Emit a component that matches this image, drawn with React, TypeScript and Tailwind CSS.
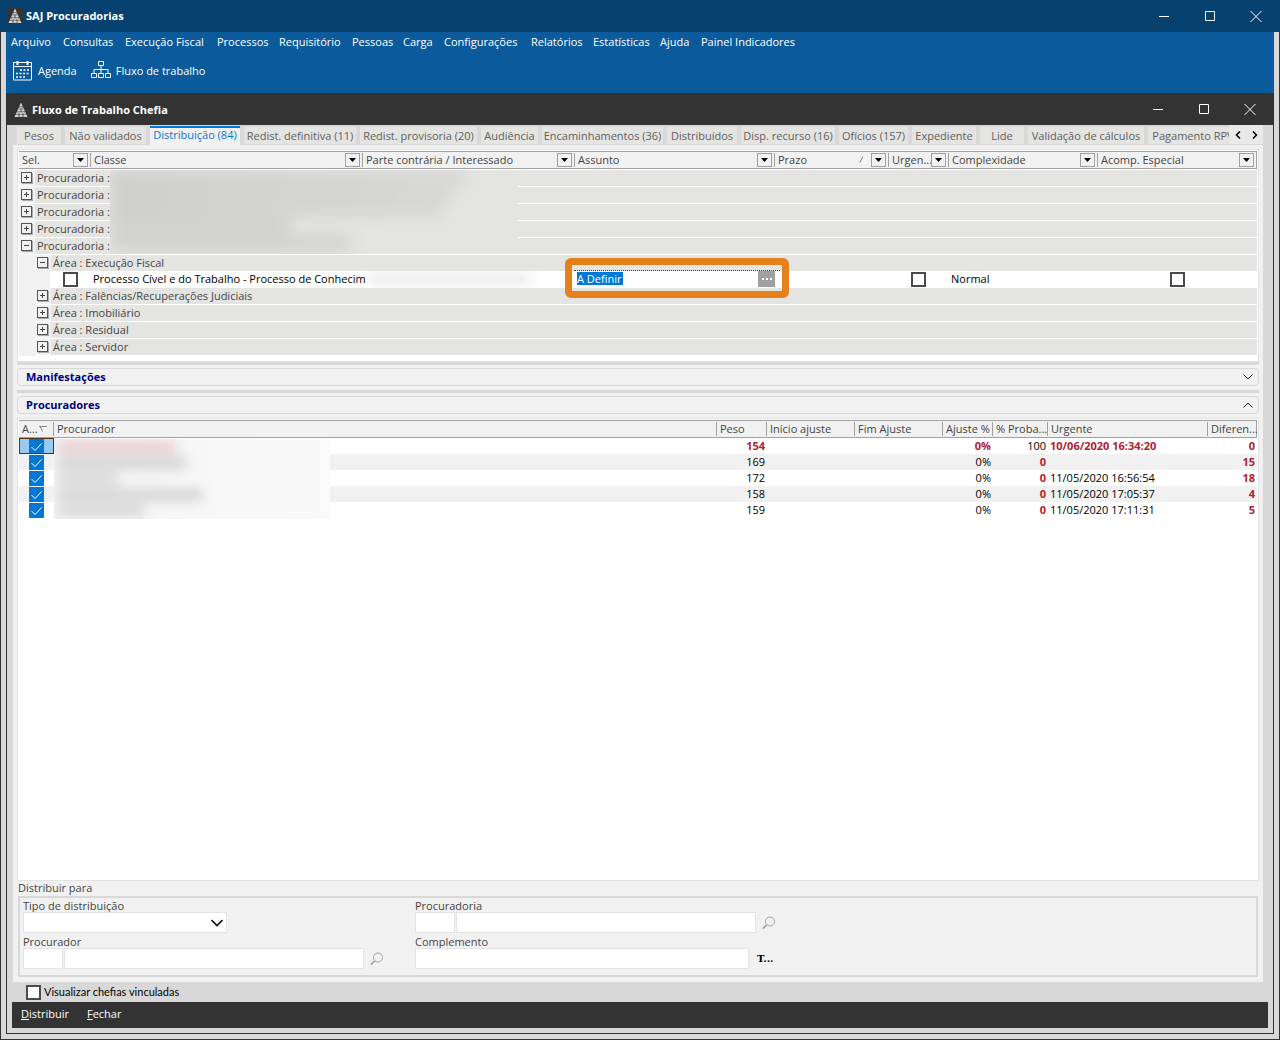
import type { ReactNode } from 'react'
import clsx from 'clsx'

const menu = [
  { label: 'Arquivo', width: 'w-[52px]' },
  { label: 'Consultas', width: 'w-[62px]' },
  { label: 'Execução Fiscal', width: 'w-[92px]' },
  { label: 'Processos', width: 'w-[62px]' },
  { label: 'Requisitório', width: 'w-[73px]' },
  { label: 'Pessoas', width: 'w-[51px]' },
  { label: 'Carga', width: 'w-[41px]' },
  { label: 'Configurações', width: 'w-[87px]' },
  { label: 'Relatórios', width: 'w-[62px]' },
  { label: 'Estatísticas', width: 'w-[67px]' },
  { label: 'Ajuda', width: 'w-[41px]' },
  { label: 'Painel Indicadores', width: 'w-[110px]' },
]

const tabs = [
  { label: 'Pesos', width: 'w-[44px]' },
  { label: 'Não validados', width: 'w-[81px]' },
  { label: 'Distribuição (84)', width: 'w-[90px]', active: true },
  { label: 'Redist. definitiva (11)', width: 'w-[112px]' },
  { label: 'Redist. provisoria (20)', width: 'w-[117px]' },
  { label: 'Audiência', width: 'w-[57px]' },
  { label: 'Encaminhamentos (36)', width: 'w-[121px]' },
  { label: 'Distribuídos', width: 'w-[70px]' },
  { label: 'Disp. recurso (16)', width: 'w-[94px]' },
  { label: 'Ofícios (157)', width: 'w-[69px]' },
  { label: 'Expediente', width: 'w-[64px]' },
  { label: 'Lide', width: 'w-[44px]' },
  { label: 'Validação de cálculos', width: 'w-[116px]' },
  { label: 'Pagamento RPV', width: 'w-[90px]' },
]

const processColumns = [
  { label: 'Sel.', width: 'w-[72px]' },
  { label: 'Classe', width: 'w-[272px]' },
  { label: 'Parte contrária / Interessado', width: 'w-[212px]' },
  { label: 'Assunto', width: 'w-[200px]' },
  { label: 'Prazo', width: 'w-[114px]', sorted: true },
  { label: 'Urgen...', width: 'w-[60px]' },
  { label: 'Complexidade', width: 'w-[149px]' },
  { label: 'Acomp. Especial', width: 'w-auto' },
]

const attorneyColumns = [
  { label: 'A...', width: 'w-[35px]' },
  { label: 'Procurador', width: 'w-auto' },
  { label: 'Peso', width: 'w-[50px]' },
  { label: 'Início ajuste', width: 'w-[88px]' },
  { label: 'Fim Ajuste', width: 'w-[88px]' },
  { label: 'Ajuste %', width: 'w-[50px]' },
  { label: '% Proba...', width: 'w-[55px]' },
  { label: 'Urgente', width: 'w-[160px]' },
  { label: 'Diferen...', width: 'w-[49px]' },
]

const attorneys = [
  { weight: 154, probability: 100, urgent: '10/06/2020 16:34:20', difference: 0 },
  { weight: 169, probability: 0, urgent: '', difference: 15 },
  { weight: 172, probability: 0, urgent: '11/05/2020 16:56:54', difference: 18 },
  { weight: 158, probability: 0, urgent: '11/05/2020 17:05:37', difference: 4 },
  { weight: 159, probability: 0, urgent: '11/05/2020 17:11:31', difference: 5 },
]

function Logo({ className }: { className?: string }) {
  return (
    <svg viewBox="0 0 16 16" className={clsx('size-4 bg-[#333]', className)}>
      <path d="M8 0.500 L14.500 15 H1.500 Z" fill="#d4d4d4" />
      <path
        d="M6 4 L11 15 M4 9 L7 15 M10 4 L5 15 M12 9 L9 15 M5 4.500 H11 M5 7 H11 M4 9.500 H13 M2 12.500 H14"
        stroke="#444"
        strokeWidth="0.500"
        fill="none"
      />
    </svg>
  )
}

function WindowButtons() {
  return (
    <div className="flex items-center">
      <button aria-label="Minimizar" className="flex h-8 w-[46px] items-center justify-center">
        <svg viewBox="0 0 12 12" className="size-3" stroke="#fff" fill="none">
          <path d="M1 6.500 H11" />
        </svg>
      </button>
      <button aria-label="Maximizar" className="flex h-8 w-[46px] items-center justify-center">
        <svg viewBox="0 0 12 12" className="size-3" stroke="#fff" fill="none">
          <path d="M1.500 1.500 H10.500 V10.500 H1.500 Z" />
        </svg>
      </button>
      <button aria-label="Fechar janela" className="flex h-8 w-[46px] items-center justify-center">
        <svg viewBox="0 0 12 12" className="size-3" stroke="#fff" fill="none">
          <path d="M0.500 1 L11.500 12 M11.500 1 L0.500 12" />
        </svg>
      </button>
    </div>
  )
}

function CheckBox({ label, checked }: { label: string; checked?: boolean }) {
  return (
    <span className="inline-grid size-[15px] align-top">
      <input
        type="checkbox"
        aria-label={label}
        defaultChecked={checked}
        className="peer col-start-1 row-start-1 size-[15px] appearance-none border-2 border-[#4b4b4b] bg-white checked:border-[#0078d7] checked:bg-[#0078d7]"
      />
      <svg
        viewBox="0 0 15 15"
        className="pointer-events-none col-start-1 row-start-1 hidden size-[15px] peer-checked:block"
        fill="none"
        stroke="#fff"
      >
        <path d="M2.500 8 L6 11.500 L12.500 4.500" />
      </svg>
    </span>
  )
}

function FilterButton({ label }: { label: string }) {
  return (
    <button
      aria-label={`Filtrar ${label}`}
      className="flex h-[14px] w-[15px] shrink-0 items-center justify-center border border-[#a0a0a0] bg-[#f1f1f1]"
    >
      <svg viewBox="0 0 7 4" className="h-1 w-[7px]">
        <path d="M0 0 H7 L3.500 4 Z" fill="#000" />
      </svg>
    </button>
  )
}

function ExpandButton({ open, label }: { open?: boolean; label: string }) {
  return (
    <button
      aria-label={`${open ? 'Recolher' : 'Expandir'} ${label}`}
      className="mt-0.5 ml-0.5 block size-[11px] border border-[#555] bg-[#f1f1f1] shadow-[1px_1px_0_#aaa]"
    >
      <svg viewBox="0 0 9 9" className="size-[9px]" stroke="#444" fill="none">
        <path d={open ? 'M2 4.500 H7' : 'M2 4.500 H7 M4.500 2 V7'} />
      </svg>
    </button>
  )
}

function GroupRow({ label, open, nested, last }: { label: string; open?: boolean; nested?: boolean; last?: boolean }) {
  return (
    <tr>
      <td colSpan={8} className="p-0">
        <div className={clsx('flex', open && nested ? 'h-4' : 'h-[17px]')}>
          {nested && <div className="w-4 bg-[#f1f1f1]" />}
          <div
            className={clsx('flex flex-1 border-white', open && nested ? 'border-b-0' : 'border-b', last && 'border-b-0 mb-px')}
          >
            <div className="w-4 bg-[#f1f1f1]">
              <ExpandButton open={open} label={label} />
            </div>
            <div className="flex-1 bg-[#e4e4e2] pl-0.5 leading-4">{label}</div>
          </div>
        </div>
      </td>
    </tr>
  )
}

function SectionBar({ title, open }: { title: string; open?: boolean }) {
  return (
    <div className="border-t-[3px] border-[#d8d8d8] pt-[3px]">
      <button
        aria-expanded={!!open}
        className="flex h-[18px] w-full items-center justify-between rounded-sm border border-[#d8d8d8] pr-[5px] pl-2 font-bold text-[#000080]"
      >
        {title}
        <svg viewBox="0 0 10 6" className="h-1.5 w-2.5" stroke="#222" fill="none">
          <path d={open ? 'M0.500 5.500 L5 1 L9.500 5.500' : 'M0.500 0.500 L5 5 L9.500 0.500'} />
        </svg>
      </button>
    </div>
  )
}

function SearchButton({ label }: { label: string }) {
  return (
    <button aria-label={label} className="ml-[5px] p-px">
      <svg viewBox="0 0 13 13" className="size-[13px]" fill="none">
        <circle cx="8" cy="5.500" r="4.500" stroke="#a3a3a3" />
        <path d="M4.500 9 L1 12.500" stroke="#999" strokeWidth="1.600" />
      </svg>
    </button>
  )
}

function Field({ label, id, children }: { label: string; id: string; children: ReactNode }) {
  return (
    <div className="flex flex-col">
      <label htmlFor={id} className="h-[14px] leading-4">
        {label}
      </label>
      <div className="flex h-[21px] items-center">{children}</div>
    </div>
  )
}

const inputStyle = 'h-[21px] border border-[#e3e3e3] bg-white px-1 outline-0'

export default function App() {
  return (
    <div className="flex min-h-screen flex-col bg-[#d8d8d8] font-['Open_Sans','Noto_Sans',sans-serif] text-[11px] leading-4 text-[#444]">
      <header className="flex h-8 items-center justify-between bg-[#06416f] pr-px pl-[7px] text-white">
        <div className="flex items-center gap-[3px] font-bold">
          <Logo />
          SAJ Procuradorias
        </div>
        <WindowButtons />
      </header>

      <div className="flex flex-1 flex-col border-x border-b border-[#333] px-[5px] pb-[5px]">
        <div className="h-[61px] bg-[#0b5a9c] text-white">
          <nav className="flex pt-0.5 pl-[5px]">
            {menu.map((item) => (
              <button key={item.label} className={clsx('shrink-0 text-left whitespace-nowrap', item.width)}>
                {item.label}
              </button>
            ))}
          </nav>
          <div className="flex gap-[14px] pt-[10px] pl-[7px]">
            <button className="flex items-center gap-[5px]">
              <svg viewBox="0 0 20 21" className="h-[21px] w-5" fill="none" stroke="#fff">
                <path d="M0.500 2.500 H18.500 V20 H0.500 Z M0.500 6.500 H18.500" />
                <path d="M4.500 1 V5 M14.500 1 V5" strokeWidth="2" />
                <path d="M7 10 H17 M3 13.500 H17 M3 17 H13" strokeWidth="1.600" strokeDasharray="2 1.500" />
              </svg>
              Agenda
            </button>
            <button className="flex items-center gap-[5px]">
              <svg viewBox="0 0 20 20" className="size-5" fill="none" stroke="#fff">
                <path d="M7.500 0.500 H12.500 V4.500 H7.500 Z M0.500 12.500 H5.500 V16.500 H0.500 Z M7.500 12.500 H12.500 V16.500 H7.500 Z M14.500 12.500 H19.500 V16.500 H14.500 Z" />
                <path d="M10 4.500 V12.500 M3 12.500 V8.500 H17 V12.500" />
              </svg>
              Fluxo de trabalho
            </button>
          </div>
        </div>

        <div className="flex flex-1 flex-col border-x border-b border-[#333]">
          <div className="flex h-8 shrink-0 items-center justify-between bg-[#333] pl-1.5 text-white">
            <div className="flex items-center gap-[3px] pt-0.5 font-bold">
              <Logo />
              Fluxo de Trabalho Chefia
            </div>
            <WindowButtons />
          </div>

          <div className="flex h-5 shrink-0 pr-[10px] pl-[10px]">
            <div role="tablist" className="flex flex-1 basis-0 gap-1 overflow-hidden">
              {tabs.map((tab) => (
                <button
                  key={tab.label}
                  role="tab"
                  aria-selected={!!tab.active}
                  className={clsx(
                    'shrink-0 text-center whitespace-nowrap',
                    tab.width,
                    tab.active
                      ? 'mt-px h-[19px] border-t-2 border-[#0078d7] bg-[#f1f1f1] pb-1 leading-[14px] text-[#0078d7]'
                      : 'mt-0.5 h-[17px] bg-[#e4e4e2] text-[#606060]',
                  )}
                >
                  {tab.label}
                </button>
              ))}
            </div>
            <div className="flex h-[19px] w-[34px] items-center justify-around bg-[#e9e9e9]">
              <button aria-label="Abas anteriores">
                <svg viewBox="0 0 6 8" className="h-2 w-1.5" fill="none" stroke="#000" strokeWidth="1.500">
                  <path d="M5 0.500 L1.500 4 L5 7.500" />
                </svg>
              </button>
              <button aria-label="Próximas abas">
                <svg viewBox="0 0 6 8" className="h-2 w-1.5" fill="none" stroke="#000" strokeWidth="1.500">
                  <path d="M1 0.500 L4.500 4 L1 7.500" />
                </svg>
              </button>
            </div>
          </div>

          <main className="mr-[10px] ml-1.5 flex flex-1 flex-col bg-[#f1f1f1] px-1 pt-1 pb-[5px]">
            <div className="relative border border-[#e3e3e3] bg-white p-px pb-[5px]">
              <table className="w-full table-fixed border-separate border-spacing-0">
                <thead>
                  <tr>
                    {processColumns.map((column) => (
                      <th
                        key={column.label}
                        className={clsx(
                          'group h-[18px] border-y border-[#a0a0a0] bg-[#f1f1f1] p-0 font-normal last:border-r',
                          column.width,
                        )}
                      >
                        <div className="flex h-[14px] items-center justify-between border-r border-[#a0a0a0] pr-0.5 pl-[3px] whitespace-nowrap group-last:border-r-0">
                          <span className="w-0 flex-1 text-left">{column.label}</span>
                          {column.sorted && (
                            <svg viewBox="0 0 8 8" className="mr-1 size-2" fill="none">
                              <path d="M0.500 7 L4 0.500" stroke="#777" />
                              <path d="M4 0.500 L7 7 H0.500" stroke="#fff" />
                            </svg>
                          )}
                          <FilterButton label={column.label} />
                        </div>
                      </th>
                    ))}
                  </tr>
                </thead>
                <tbody>
                  <tr>
                    <td colSpan={8} className="h-px p-0" />
                  </tr>
                  <GroupRow label="Procuradoria :" />
                  <GroupRow label="Procuradoria :" />
                  <GroupRow label="Procuradoria :" />
                  <GroupRow label="Procuradoria :" />
                  <GroupRow label="Procuradoria :" open />
                  <GroupRow label="Área : Execução Fiscal" open nested />
                  <tr className="text-black">
                    <td className="h-[17px] p-0">
                      <div className="flex h-[17px]">
                        <div className="w-[31px] bg-[#f1f1f1]" />
                        <div className="pt-px pl-[13px]">
                          <CheckBox label="Selecionar processo" />
                        </div>
                      </div>
                    </td>
                    <td className="p-0 pl-0.5 align-top whitespace-nowrap">
                      Processo Cível e do Trabalho - Processo de Conhecim
                    </td>
                    <td className="p-0">
                      <div className="ml-1 h-[17px] w-[172px] overflow-hidden bg-[#fcfcfc]">
                        <div className="mt-1 ml-1 h-2 w-[156px] bg-[#eaeaea] blur-xs" />
                      </div>
                    </td>
                    <td className="relative p-0">
                      <div className="flex h-[17px] items-start justify-between pl-0.5">
                        <input
                          aria-label="Assunto"
                          defaultValue="A Definir"
                          className="mt-px h-[13px] w-[46px] bg-[#0078d7] p-0 text-white outline-0"
                        />
                        <button
                          aria-label="Escolher assunto"
                          className="flex h-4 w-[17px] items-center justify-center gap-0.5 bg-[#a0a0a0]"
                        >
                          <span className="size-0.5 bg-white" />
                          <span className="size-0.5 bg-white" />
                          <span className="size-0.5 bg-white" />
                        </button>
                      </div>
                      <div className="pointer-events-none absolute -top-[13px] -left-[10px] h-10 w-56 rounded-md border-[7px] border-[#e5801a]">
                        <div className="mx-0.5 mt-[5px] border-t border-dotted border-[#5a3213]" />
                      </div>
                    </td>
                    <td className="p-0" />
                    <td className="p-0 pt-px pr-0.5 text-center align-top">
                      <CheckBox label="Urgente" />
                    </td>
                    <td className="p-0 pl-0.5 align-top">Normal</td>
                    <td className="p-0 pt-px text-center align-top">
                      <CheckBox label="Acompanhamento especial" />
                    </td>
                  </tr>
                  <GroupRow label="Área : Falências/Recuperações Judiciais" nested />
                  <GroupRow label="Área : Imobiliário" nested />
                  <GroupRow label="Área : Residual" nested />
                  <GroupRow label="Área : Servidor" nested last />
                </tbody>
              </table>
              {/* nomes ocultos das procuradorias */}
              <div className="absolute top-5 left-[92px] h-[84px] w-[408px] overflow-hidden bg-[#e4e4e2]">
                <div className="blur-[7px]">
                  <div className="h-[18px] w-[355px] bg-linear-to-r from-[#cfcfce] to-[#d8d8d7]" />
                  <div className="h-[17px] w-[342px] bg-linear-to-r from-[#cfcfce] to-[#d8d8d7]" />
                  <div className="h-[13px] w-[332px] bg-linear-to-r from-[#cfcfce] to-[#d8d8d7]" />
                  <div className="h-[17px] w-[180px] bg-[#d2d2d1]" />
                  <div className="h-[16px] w-[240px] bg-[#d2d2d1]" />
                </div>
              </div>
            </div>

            <SectionBar title="Manifestações" />
            <div className="h-1" />
            <SectionBar title="Procuradores" open />

            <div className="relative mt-1 flex-1 border border-[#e3e3e3] bg-white p-px">
              <table className="w-full table-fixed border-separate border-spacing-0">
                <thead>
                  <tr>
                    {attorneyColumns.map((column, index) => (
                      <th
                        key={column.label}
                        className={clsx(
                          'group h-[18px] border-y border-[#a0a0a0] bg-[#f1f1f1] p-0 font-normal last:border-r',
                          column.width,
                        )}
                      >
                        <div className="flex h-[14px] items-center gap-px border-r border-[#a0a0a0] pl-[3px] whitespace-nowrap group-last:border-r-0">
                          {column.label}
                          {index === 0 && (
                            <svg viewBox="0 0 8 8" className="size-2 shrink-0" fill="none">
                              <path d="M0 1.500 H8 M1 1.500 L4 7" stroke="#888" />
                              <path d="M4 7 L7 2" stroke="#fff" />
                            </svg>
                          )}
                        </div>
                      </th>
                    ))}
                  </tr>
                </thead>
                <tbody>
                  {attorneys.map((row, index) => (
                    <tr
                      key={row.weight}
                      className={clsx('text-right text-black', index % 2 === 1 && 'bg-[#f1f1f1]')}
                    >
                      <td
                        className={clsx(
                          'h-4 p-0',
                          index === 0 && 'bg-[#99c9ef] outline outline-1 -outline-offset-1 outline-[#5a3213]',
                        )}
                      >
                        <div className="flex h-4 items-end justify-center">
                          <CheckBox label={`Procurador ${index + 1}`} checked />
                        </div>
                      </td>
                      <td className="p-0" />
                      <td className={clsx('p-0 pr-0.5', index === 0 && 'font-bold text-[#b0202e]')}>{row.weight}</td>
                      <td className="p-0" />
                      <td className="p-0" />
                      <td className={clsx('p-0 pr-0.5', index === 0 && 'font-bold text-[#b0202e]')}>0%</td>
                      <td className={clsx('p-0 pr-0.5', index > 0 && 'font-bold text-[#b0202e]')}>{row.probability}</td>
                      <td
                        className={clsx(
                          'p-0 pl-0.5 text-left whitespace-nowrap',
                          index === 0 && 'font-bold text-[#b0202e]',
                        )}
                      >
                        {row.urgent}
                      </td>
                      <td className="p-0 pr-0.5 font-bold text-[#b0202e]">{row.difference}</td>
                    </tr>
                  ))}
                </tbody>
              </table>
              {/* nomes ocultos dos procuradores */}
              <div className="absolute top-5 left-9 h-20 w-[276px] overflow-hidden bg-linear-to-r from-[#f4f4f4] to-[#fafafa]">
                <div className="flex flex-col gap-1 pt-0.5 pl-1 blur-[6px]">
                  <div className="h-3 w-[118px] bg-[#e9cdcf]" />
                  <div className="h-3 w-[128px] bg-[#d3d3d3]" />
                  <div className="h-3 w-[60px] bg-[#d8d8d8]" />
                  <div className="h-3 w-[144px] bg-[#d3d3d3]" />
                  <div className="h-3 w-[86px] bg-[#d8d8d8]" />
                </div>
              </div>
            </div>

            <fieldset>
              <legend className="h-[15px] pl-px leading-[14px]">Distribuir para</legend>
              <div className="mx-px grid h-[81px] grid-cols-[392px_1fr] grid-rows-[36px_36px] border-2 border-[#d8d8d8] px-[3px]">
                <Field label="Tipo de distribuição" id="tipo">
                  <span className="inline-grid w-[204px] items-center">
                    <select id="tipo" className={clsx(inputStyle, 'col-start-1 row-start-1 w-full appearance-none')} />
                    <svg
                      viewBox="0 0 12 8"
                      className="pointer-events-none col-start-1 row-start-1 mr-1 h-2 w-3 justify-self-end"
                      fill="none"
                      stroke="#111"
                      strokeWidth="1.600"
                    >
                      <path d="M0.500 1 L6 6.500 L11.500 1" />
                    </svg>
                  </span>
                </Field>
                <Field label="Procuradoria" id="procuradoria">
                  <input id="procuradoria" className={clsx(inputStyle, 'w-10')} />
                  <input aria-label="Nome da procuradoria" className={clsx(inputStyle, 'ml-px w-[300px]')} />
                  <SearchButton label="Pesquisar procuradoria" />
                </Field>
                <Field label="Procurador" id="procurador">
                  <input id="procurador" className={clsx(inputStyle, 'w-10')} />
                  <input aria-label="Nome do procurador" className={clsx(inputStyle, 'ml-px w-[300px]')} />
                  <SearchButton label="Pesquisar procurador" />
                </Field>
                <Field label="Complemento" id="complemento">
                  <input id="complemento" className={clsx(inputStyle, 'w-[334px]')} />
                  <button className="ml-2 font-['DejaVu_Serif',serif] text-[10px] font-bold text-black">T...</button>
                </Field>
              </div>
            </fieldset>
          </main>

          <label className="ml-[19px] flex h-5 shrink-0 items-center gap-[3px] font-['Lato',sans-serif] text-black">
            <input type="checkbox" className="size-[15px] appearance-none border-2 border-[#4b4b4b] bg-white" />
            Visualizar chefias vinculadas
          </label>
          <footer className="mx-[5px] mb-[5px] flex h-[26px] shrink-0 gap-[18px] bg-[#333] pt-1 pl-[9px] text-white">
            <button className="h-4">
              <span className="underline">D</span>istribuir
            </button>
            <button className="h-4">
              <span className="underline">F</span>echar
            </button>
          </footer>
        </div>
      </div>
    </div>
  )
}
